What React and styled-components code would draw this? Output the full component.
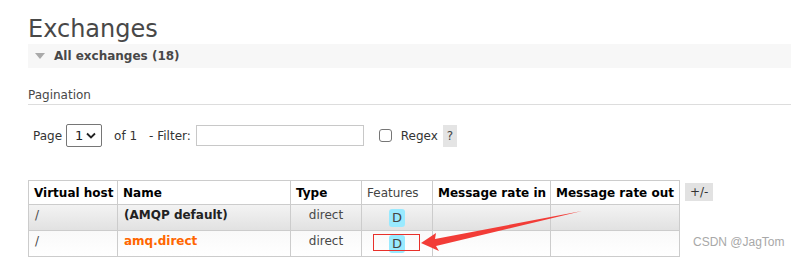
import React from "react";
import styled, { createGlobalStyle } from "styled-components";

const GlobalStyle = createGlobalStyle`
  body {
    margin: 0;
    background: #fff;
    font-family: "DejaVu Sans", Verdana, sans-serif;
    font-size: 12px;
    color: #484848;
  }
`;

const Page = styled.div`
  position: relative;
  width: 791px;
  height: 259px;
  overflow: hidden;
  padding-left: 28px;
  box-sizing: border-box;
`;

const Title = styled.h1`
  margin: 15px 0 1px;
  font-size: 24px;
  line-height: 28px;
  font-weight: normal;
  color: #484848;
`;

const SectionBar = styled.div`
  display: flex;
  align-items: center;
  gap: 9px;
  height: 24px;
  padding-left: 7px;
  background: #f7f7f7;
  font-weight: bold;
  color: #484848;
`;

const Triangle = styled.span`
  width: 0;
  height: 0;
  border-left: 5px solid transparent;
  border-right: 5px solid transparent;
  border-top: 6px solid #aaa;
`;

const SubHeading = styled.h3`
  margin: 20px 0 0;
  padding-bottom: 2px;
  font-size: 12px;
  line-height: 14px;
  font-weight: normal;
  color: #484848;
  border-bottom: 1px solid #ddd;
`;

const Controls = styled.div`
  display: flex;
  align-items: center;
  height: 23px;
  margin-top: 19px;
  padding-left: 5px;
  color: #333;
`;

const Label = styled.span`
  margin-right: ${(p) => p.$gap || 0}px;
`;

const SelectBox = styled.div`
  display: flex;
  align-items: center;
  justify-content: space-between;
  box-sizing: border-box;
  width: 36px;
  height: 23px;
  padding: 0 5px 0 8px;
  margin: 0 12px 0 4px;
  border: 1px solid #767676;
  border-radius: 2px;
  font-size: 13px;
  color: #222;
`;

const TextInput = styled.div`
  box-sizing: border-box;
  width: 168px;
  height: 21px;
  margin-right: 15px;
  border: 1px solid #c8c8c8;
`;

const Checkbox = styled.span`
  box-sizing: border-box;
  width: 13px;
  height: 13px;
  margin-right: 9px;
  border: 1px solid #767676;
  border-radius: 3px;
`;

const HelpBox = styled.span`
  display: flex;
  align-items: center;
  justify-content: center;
  width: 14px;
  height: 22px;
  margin-left: 5px;
  background: #e4e4e4;
  color: #444;
`;

const TableRow = styled.div`
  display: flex;
  align-items: flex-start;
  gap: 5px;
  margin-top: 33px;
`;

const Table = styled.table`
  border-collapse: collapse;
  table-layout: fixed;
  width: 651px;
  color: #444;
`;

const Th = styled.th`
  height: 23px;
  padding: 0 5px;
  border: 1px solid #ccc;
  text-align: left;
  font-weight: ${(p) => (p.$light ? "normal" : "bold")};
  color: ${(p) => (p.$light ? "#444" : "#000")};
  white-space: nowrap;
  background: #fff;
`;

const Tr = styled.tr`
  background: ${(p) =>
    p.$shaded
      ? "linear-gradient(#f3f3f3, #e1e1e1)"
      : "linear-gradient(#f9f9f9, #ffffff)"};
`;

const Td = styled.td`
  height: 26px;
  box-sizing: border-box;
  padding: 3px 6px 0;
  vertical-align: top;
  line-height: 14px;
  border-left: 1px solid #ccc;
  border-right: 1px solid #ccc;
  border-bottom: 1px solid #ccc;
  text-align: ${(p) => p.$align || "left"};
  font-weight: ${(p) => (p.$bold ? "bold" : "normal")};
  color: ${(p) => p.$color || "#484848"};
`;

const Badge = styled.span`
  display: inline-block;
  width: 16px;
  height: 18px;
  margin-top: 1px;
  line-height: 18px;
  text-align: center;
  border-radius: 3px;
  background: #99eaff;
  color: #444;
  font-size: 13px;
`;

const ToggleButton = styled.span`
  margin-top: 3px;
  padding: 0 5px;
  height: 18px;
  line-height: 18px;
  background: #e2e2e2;
  color: #333;
`;

const Overlay = styled.svg`
  position: absolute;
  left: 0;
  top: 0;
  pointer-events: none;
`;

const Watermark = styled.span`
  position: absolute;
  left: 693px;
  top: 235px;
  font-family: "Liberation Sans", Arial, sans-serif;
  font-size: 12px;
  color: #a8a8a8;
`;

const rows = [
  { vhost: "/", name: "(AMQP default)", type: "direct", shaded: true },
  { vhost: "/", name: "amq.direct", type: "direct", link: true },
];

export default function App() {
  return (
    <>
      <GlobalStyle />
      <Page>
        <Title>Exchanges</Title>
        <SectionBar>
          <Triangle />
          All exchanges (18)
        </SectionBar>
        <SubHeading>Pagination</SubHeading>
        <Controls>
          <Label>Page</Label>
          <SelectBox>
            1
            <svg width="10" height="7" viewBox="0 0 10 7">
              <path d="M1 1.5 L5 5.5 L9 1.5" fill="none" stroke="#222" strokeWidth="1.8" />
            </svg>
          </SelectBox>
          <Label $gap={12}>of 1</Label>
          <Label $gap={5}>- Filter:</Label>
          <TextInput />
          <Checkbox />
          <Label>Regex</Label>
          <HelpBox>?</HelpBox>
        </Controls>
        <TableRow>
          <Table>
            <colgroup>
              <col style={{ width: 89 }} />
              <col style={{ width: 173 }} />
              <col style={{ width: 71 }} />
              <col style={{ width: 71 }} />
              <col style={{ width: 118 }} />
              <col style={{ width: 129 }} />
            </colgroup>
            <thead>
              <tr>
                <Th>Virtual host</Th>
                <Th>Name</Th>
                <Th>Type</Th>
                <Th $light>Features</Th>
                <Th>Message rate in</Th>
                <Th>Message rate out</Th>
              </tr>
            </thead>
            <tbody>
              {rows.map((r) => (
                <Tr key={r.name} $shaded={r.shaded}>
                  <Td>{r.vhost}</Td>
                  <Td $bold $color={r.link ? "#ff6600" : "#222"}>
                    {r.name}
                  </Td>
                  <Td $align="center">{r.type}</Td>
                  <Td $align="center">
                    <Badge>D</Badge>
                  </Td>
                  <Td />
                  <Td />
                </Tr>
              ))}
            </tbody>
          </Table>
          <ToggleButton>+/-</ToggleButton>
        </TableRow>
        <Overlay width="791" height="259">
          <rect x="373.5" y="234.5" width="46" height="16" fill="none" stroke="#e8302a" strokeWidth="1" />
          <polygon
            points="421,243 436,233 435,239 582,211 436,246 439,251"
            fill="#f23c37"
          />
        </Overlay>
        <Watermark>CSDN @JagTom</Watermark>
      </Page>
    </>
  );
}
